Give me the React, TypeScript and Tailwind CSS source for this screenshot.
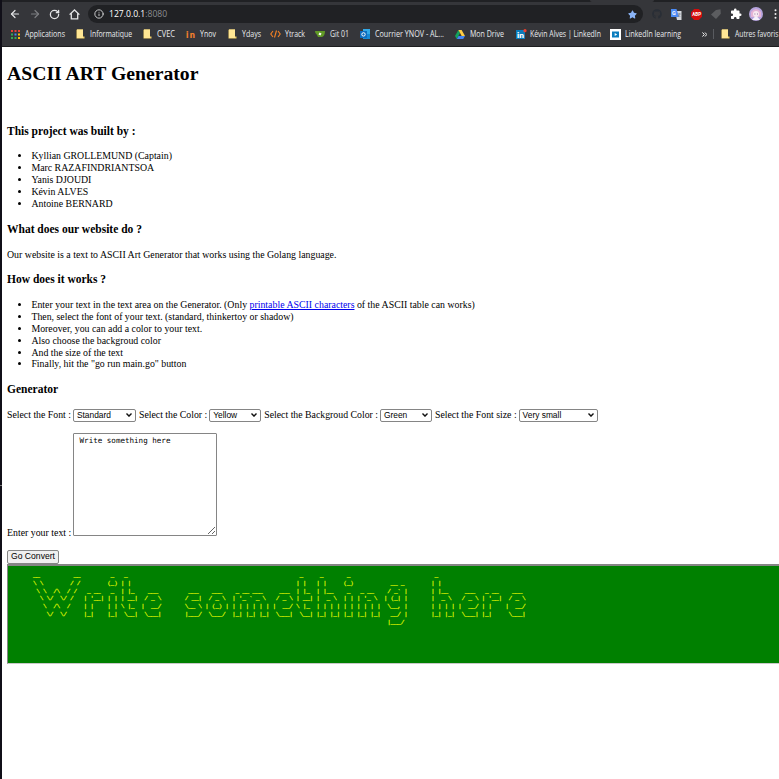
import React from "react";
import { ArrowLeft, ArrowRight, RotateCw, Info } from "lucide-react";
import { FaGithub, FaStar } from "react-icons/fa";
import { MdExtension } from "react-icons/md";

const G: Record<string, string[]> = {
  W: ["__          __ ", "\\ \\        / / ", " \\ \\  /\\  / /  ", "  \\ \\/  \\/ /   ", "   \\  /\\  /    ", "    \\/  \\/     ", "               "],
  r: ["       ", "       ", " _ __  ", "| '__| ", "| |    ", "|_|    ", "       "],
  i: [" _  ", "(_) ", " _  ", "| | ", "| | ", "|_| ", "    "],
  t: [" _    ", "| |   ", "| |_  ", "| __| ", "\\ |_  ", " \\__| ", "      "],
  e: ["       ", "       ", "  ___  ", " / _ \\ ", "|  __/ ", " \\___| ", "       "],
  s: ["      ", "      ", " ___  ", "/ __| ", "\\__ \\ ", "|___/ ", "      "],
  o: ["        ", "        ", "  ___   ", " / _ \\  ", "| (_) | ", " \\___/  ", "        "],
  m: ["            ", "            ", " _ __ ___   ", "| '_ ` _ \\  ", "| | | | | | ", "|_| |_| |_| ", "            "],
  h: [" _      ", "| |     ", "| |__   ", "|  _ \\  ", "| | | | ", "|_| |_| ", "        "],
  n: ["        ", "        ", " _ __   ", "| '_ \\  ", "| | | | ", "|_| |_| ", "        "],
  g: ["        ", "  __ _  ", " / _` | ", "| (_| | ", " \\__, | ", "  __/ | ", " |___/  "],
  " ": ["      ", "      ", "      ", "      ", "      ", "      ", "      "],
};

const banner = (text: string) =>
  [0, 1, 2, 3, 4, 5, 6].map((row) => Array.from(text).map((c) => G[c][row]).join("")).join("\n");

function Folder() {
  return (
    <svg width="9" height="10" viewBox="0 0 9 10"><path d="M1 .5h6v7H8.5V9.5H.5V1z" fill="#f3cf67" /><path d="M1 .5h6v8.5H1z" fill="#ffe694" /></svg>
  );
}

function Mark({ x, w, children }: { x: string; w: string; children: React.ReactNode }) {
  return (
    <div className={`flex shrink-0 items-center ${x}`}>
      <span className={`flex shrink-0 items-center ${w}`}>{children}</span>
    </div>
  );
}

function Label({ children, w }: { children: string; w: number }) {
  return (
    <svg width={w} height="12" className="shrink-0 overflow-visible">
      <text x="0" y="9.3" fontSize="8.2" fill="#e8eaed" textLength={w} lengthAdjust="spacingAndGlyphs" fontFamily="Open Sans, Noto Sans, sans-serif">{children}</text>
    </svg>
  );
}

function Chrome() {
  return (
    <header className="flex h-[47px] flex-col overflow-hidden border-b border-[#1d1e20] bg-[#35363a]">
      <div className="flex h-[2px] shrink-0 justify-between bg-[#202124]">
        <span className="ml-[588px] h-[2px] w-[64px] rounded-b bg-[#35363a]" />
      </div>
      <div className="mt-[3px] flex h-[18px] shrink-0 items-center">
        <ArrowLeft className="ml-[7px] shrink-0 text-[#e4e5e7]" size={12} strokeWidth={2.4} />
        <ArrowRight className="ml-[8px] shrink-0 text-[#7d7e81]" size={12} strokeWidth={2.4} />
        <RotateCw className="ml-[8px] shrink-0 text-[#e4e5e7]" size={11} strokeWidth={2.8} />
        <svg className="ml-[9px] shrink-0" width="11" height="11" viewBox="0 0 11 11" fill="none" stroke="#e4e5e7" strokeWidth="1.3"><path d="M.6 5.6 5.5 1l4.9 4.6M2.3 4.4v5.5h6.4V4.4" /></svg>
        <div className="ml-[8px] flex h-[18px] w-[555px] shrink-0 items-center rounded-full bg-[#202124] pl-[6px] pr-[6px]">
          <Info size={10} strokeWidth={2.2} className="text-[#d5d6d8]" />
          <span className="ml-[5px] font-['Open_Sans',sans-serif] text-[8.6px] leading-none text-white">127.0.0.1<span className="text-[#8b8d91]">:8080</span></span>
          <FaStar size={9} className="ml-auto text-[#8ab4f8]" />
        </div>
        <FaGithub size={10} className="ml-[9px] shrink-0 text-[#292e36]" />
        <svg className="ml-[9px] shrink-0" width="11" height="11" viewBox="0 0 11 11"><path d="M4 2h6.5v9H6z" fill="#d4d7dc" /><path d="M0 0h5.5L8 8H0z" fill="#4b8bf5" /><text x="1.1" y="6" fontSize="5.5" fontWeight="700" fill="white" fontFamily="Roboto">G</text><path d="M6.8 5h3M8.2 4v1c0 1-.5 2-1.3 3M7.3 6l2 2" stroke="#6c7482" strokeWidth=".6" fill="none" /></svg>
        <svg className="ml-[9px] shrink-0" width="11" height="11" viewBox="0 0 11 11"><path d="M3.2 0h4.6L11 3.2v4.6L7.8 11H3.2L0 7.8V3.2z" fill="#d30d0d" /><text x="1.3" y="7.2" fontSize="4.5" fontWeight="700" fill="white" fontFamily="Roboto">ABP</text></svg>
        <svg className="ml-[9px] shrink-0" width="10" height="10" viewBox="0 0 10 10"><path d="M0 5.6 5 1l4.5-.8.3 4.5L5.5 9.6Q5 10 4.4 9.5z" fill="#5c5d60" /></svg>
        <MdExtension size={12} className="ml-[9px] shrink-0 text-white" />
        <svg className="ml-[7px] shrink-0" width="14" height="14" viewBox="0 0 14 14"><circle cx="7" cy="7" r="7" fill="#b6a4dd" /><path d="M2 5q5-6 10 0v5H2z" fill="#e4b3d5" /><circle cx="7" cy="7" r="3" fill="#f7e9f0" /><path d="M3 13q4-7 8 0z" fill="#f4f0fb" /><path d="M5.5 7h.8M8 7h.8" stroke="#74538e" /></svg>
        <svg className="ml-[11px] shrink-0" width="3" height="10" fill="#eee"><circle cx="1.5" cy="1.3" r="1" /><circle cx="1.5" cy="5" r="1" /><circle cx="1.5" cy="8.7" r="1" /></svg>
      </div>
      <div className="mt-[5px] flex h-3 shrink-0 items-center">
        <Mark x="ml-[9px]" w="w-[14px]"><svg width="9" height="9" viewBox="0 0 9 9"><path d="M0 0h2v2H0zM3.5 0h2v2h-2zM7 0h2v2H7z" fill="#e94235" /><path d="M0 3.5h2v2H0zM0 7h2v2H0zM3.5 7h2v2h-2z" fill="#34a853" /><path d="M3.5 3.5h2v2h-2z" fill="#4285f4" /><path d="M7 3.5h2v2H7zM7 7h2v2H7z" fill="#fbbc05" /></svg></Mark>
        <Label w={40}>Applications</Label>
        <Mark x="ml-[11px]" w="w-[14px]"><Folder /></Mark><Label w={42}>Informatique</Label>
        <Mark x="ml-[11px]" w="w-[14px]"><Folder /></Mark><Label w={18}>CVEC</Label>
        <Mark x="ml-[11px]" w="w-[14px]"><svg width="10" height="9" className="overflow-visible"><text x="0" y="7.5" fontSize="9" fontWeight="800" fill="#f07e2d" textLength="9" fontFamily="Lato">in</text></svg></Mark><Label w={16}>Ynov</Label>
        <Mark x="ml-[12px]" w="w-[14px]"><Folder /></Mark><Label w={19}>Ydays</Label>
        <Mark x="ml-[9px]" w="w-[15px]"><svg width="11" height="8" fill="none" stroke="#f48024" strokeWidth="1.1"><path d="M3 1 .8 4 3 7M8 1l2.2 3L8 7M6.5.5l-2 7" /></svg></Mark><Label w={20}>Ytrack</Label>
        <Mark x="ml-[10px]" w="w-[15px]"><svg width="10" height="8"><path d="M0 1h10q0 5-3 6H3L1.7 4.5Q0 4 0 1" fill="#609926" /><path d="m4.5 2.5 2 1-1 2-2-1z" fill="white" /></svg></Mark><Label w={19}>Git 01</Label>
        <Mark x="ml-[11px]" w="w-[15px]"><svg width="10" height="10"><path d="M3 0h7v10H3z" fill="#32a9e7" /><path d="M6 5h4v5H3z" fill="#1689d4" /><path d="M0 2h7v7H0z" fill="#0f6cbd" /><circle cx="3.5" cy="5.4" r="1.7" stroke="white" fill="none" /></svg></Mark><Label w={69}>Courrier YNOV - AL...</Label>
        <Mark x="ml-[11px]" w="w-[15px]"><svg width="10" height="9"><path d="M3.4 0 0 6l1.8 3L5 3z" fill="#12a35c" /><path d="M3.4 0h3.2L10 6H6.7z" fill="#ffce43" /><path d="M3.5 6H10L8.2 9H1.8z" fill="#4285f4" /></svg></Mark><Label w={34}>Mon Drive</Label>
        <Mark x="ml-[12px]" w="w-[14px]"><svg width="11" height="10"><path d="M0 1h9v9H0z" fill="#0a7bba" /><text x="1" y="8.5" fontSize="8" fontWeight="800" fill="white" fontFamily="Lato" textLength="7" lengthAdjust="spacingAndGlyphs">in</text><circle cx="9" cy="1.7" r="1.6" fill="#ef402f" /></svg></Mark><Label w={71}>Kévin Alves | LinkedIn</Label>
        <Mark x="ml-[9px]" w="w-[15px]"><svg width="11" height="11"><path d="M0 0h11v11H0z" fill="white" /><path d="M2 2.5h7v6H2z" fill="#0c7dbd" /><path d="m4.7 4 2.5 1.5L4.7 7z" fill="white" /></svg></Mark><Label w={56}>LinkedIn learning</Label>
        <svg className="ml-[21px] shrink-0" width="5" height="5" fill="none" stroke="#fff"><path d="m.5.5 1.8 2L.5 4.5M3 .5l1.8 2L3 4.5" /></svg>
        <span className="ml-[6px] h-[10px] w-px shrink-0 bg-[#595b60]" />
        <Mark x="ml-[7px]" w="w-[14px]"><Folder /></Mark><Label w={43.5}>Autres favoris</Label>
      </div>
    </header>
  );
}

function Sel({ label, value, w, mr }: { label: string; value: string; w: number; mr?: boolean }) {
  return (
    <>
      <span>{label}</span>
      <span style={{ width: w }} className={`ml-[2px] flex h-[13px] shrink-0 items-center justify-between rounded-[2px] border border-[#858585] bg-white pl-[3px] pr-[3px] font-['Liberation_Sans',sans-serif] text-[8.4px] leading-none text-black ${mr ? "mr-[3px]" : ""}`}>
        {value}
        <svg width="6" height="4" fill="none" stroke="#111" strokeWidth="1.4"><path d="m.5.6 2.5 2.5L5.5.6" /></svg>
      </span>
    </>
  );
}

export default function App() {
  return (
    <div className="flex h-[779px] w-[779px] overflow-hidden bg-white">
      <div className="w-[2px] shrink-0 bg-[#100f18] pt-[485px]"><div className="h-px bg-[#777]" /></div>
      <div className="flex w-[777px] min-w-0 flex-col">
        <Chrome />
        <main className="flex flex-col whitespace-nowrap pl-[5px] font-['Liberation_Serif',serif] text-[9.85px] leading-[11.85px] text-black">
          <h1 className="mt-[15px] text-[19.7px] font-bold leading-[23px]">ASCII ART Generator</h1>
          <h3 className="mt-[39px] text-[11.5px] font-bold leading-[14px]">This project was built by :</h3>
          <ul className="mt-[12.4px] list-disc pl-[24.4px]">
            <li>Kyllian GROLLEMUND (Captain)</li><li>Marc RAZAFINDRIANTSOA</li><li>Yanis DJOUDI</li><li>Kévin ALVES</li><li>Antoine BERNARD</li>
          </ul>
          <h3 className="mt-[12.3px] text-[11.5px] font-bold leading-[14px]">What does our website do ?</h3>
          <p className="mt-[13px]">Our website is a text to ASCII Art Generator that works using the Golang language.</p>
          <h3 className="mt-[11.2px] text-[11.5px] font-bold leading-[14px]">How does it works ?</h3>
          <ul className="mt-[13.3px] list-disc pl-[24.4px]">
            <li>Enter your text in the text area on the Generator. (Only <a className="text-[#0000ee] underline">printable ASCII characters</a> of the ASCII table can works)</li>
            <li>Then, select the font of your text. (standard, thinkertoy or shadow)</li>
            <li>Moreover, you can add a color to your text.</li>
            <li>Also choose the backgroud color</li>
            <li>And the size of the text</li>
            <li>Finally, hit the "go run main.go" button</li>
          </ul>
          <h3 className="mt-[11.8px] text-[11.5px] font-bold leading-[14px]">Generator</h3>
          <div className="mt-[12.8px] flex h-[13px] items-center text-[9.8px]">
            <Sel label="Select the Font :" value="Standard" w={63} mr />
            <Sel label="Select the Color :" value="Yellow" w={52} mr />
            <Sel label="Select the Backgroud Color :" value="Green" w={52} mr />
            <Sel label="Select the Font size :" value="Very small" w={79} />
          </div>
          <div className="mt-[10.8px] flex h-[103px] items-end">
            <span className="-mb-[3px] w-[66px] shrink-0">Enter your text :</span>
            <textarea defaultValue=" Write something here" spellCheck={false} className="block h-[103px] w-[144px] resize rounded-[1px] border border-[#858585] bg-white px-[1px] py-[2px] font-['DejaVu_Sans_Mono',monospace] text-[7.55px] leading-[10px] outline-none" />
          </div>
          <button className="mt-[14px] h-[14px] w-[52px] rounded-[2px] border border-[#858585] bg-[#efefef] font-['Liberation_Sans',sans-serif] text-[8.6px] leading-none">Go Convert</button>
          <pre className="h-[100px] w-[790px] border border-t-2 border-[#858585] border-b-[#c9c9c9] bg-[#008000] pl-[25px] pt-[6px] font-['Liberation_Mono',monospace] text-[6.2px] leading-[7.9px] tracking-[-0.34px] text-[#d8ee00] [-webkit-text-stroke:0.3px_#d8ee00]">{banner("Write something here")}</pre>
        </main>
      </div>
    </div>
  );
}
